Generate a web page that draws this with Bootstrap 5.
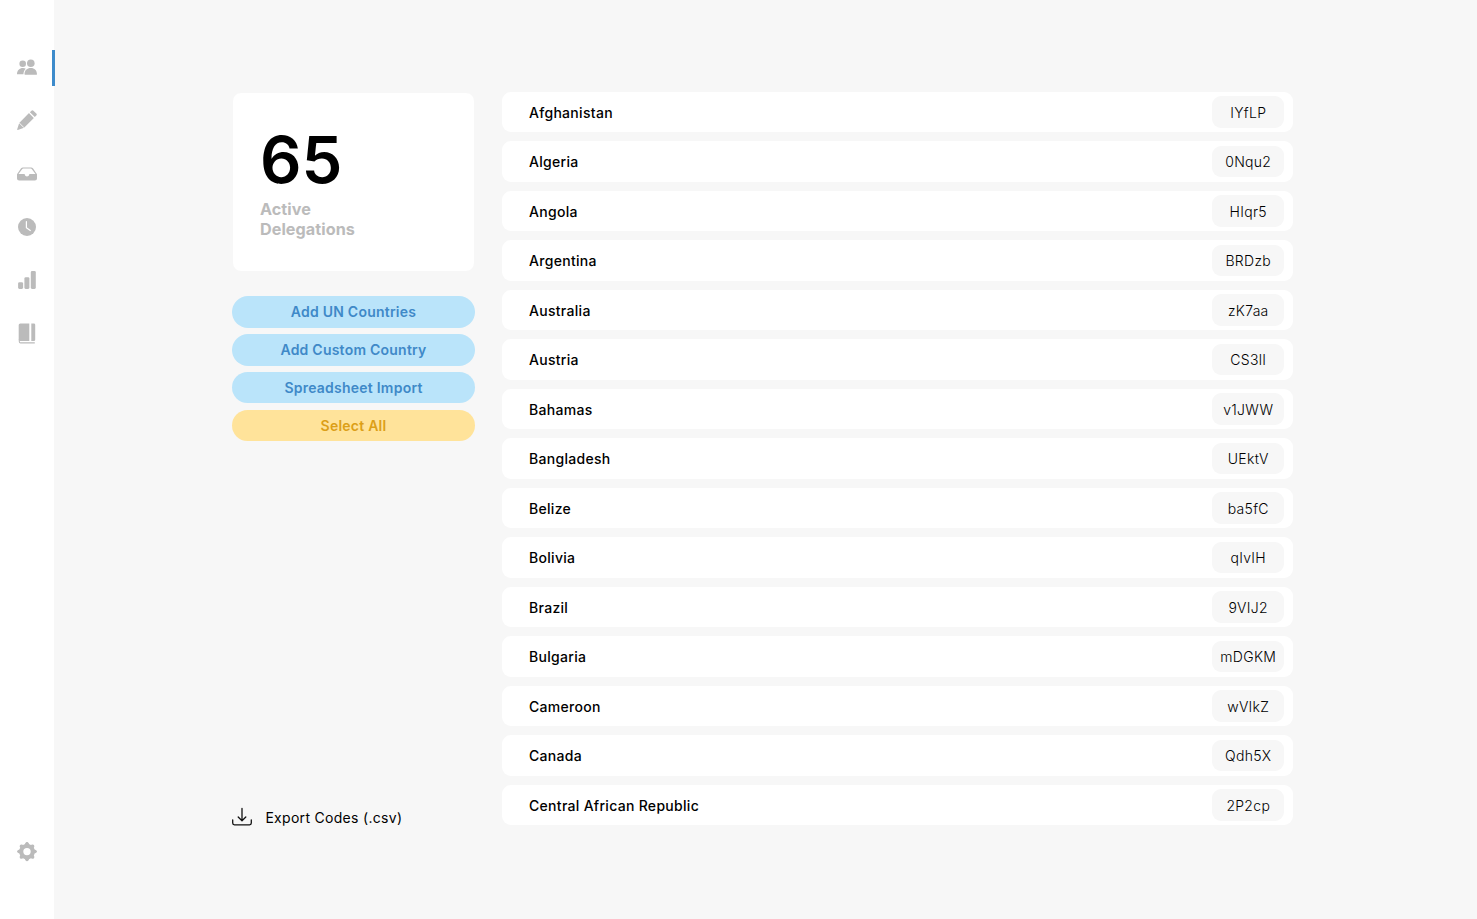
<!DOCTYPE html>
<html lang="en">
<head>
<meta charset="utf-8">
<meta name="viewport" content="width=device-width, initial-scale=1">
<title>Delegations</title>
<link href="https://cdn.jsdelivr.net/npm/bootstrap@5.3.0/dist/css/bootstrap.min.css" rel="stylesheet">
<style>
body{font-family:Inter,sans-serif;font-size:14px;letter-spacing:.3px;line-height:18px;color:#000;background:#f7f7f7}
.side{width:54px;padding:40.4px 0;color:#bbb}
.side a{height:53.3px;color:inherit}
.side svg{display:block;width:20px;height:20px}
.side a.active::after{content:"";position:absolute;right:-1px;top:9.6px;width:3px;height:36px;background:#3d8bcb}
.page{padding:91.9px 0 0 178px}
.left-col{width:243px;height:735px}
.stat{height:180px;margin-bottom:24.4px;padding:0 27px;border:1px solid #f7f7f7;border-radius:9px}
.count{font-size:65px;line-height:68px;font-weight:600;letter-spacing:0;margin-top:33px}
.label{font-size:16.2px;line-height:20px;font-weight:700;letter-spacing:.05px;color:#bbb;margin-top:5.6px}
.act{height:31.5px;margin-bottom:6.3px;padding:0;font-size:14px;line-height:32px;font-weight:600;letter-spacing:.23px;border:0;border-radius:16px;background:#bae4fa;color:#3f89c8}
.act.pick{background:#ffe39a;color:#dc9f18}
.codes{width:791px;margin-left:27px;gap:9px}
.entry{height:40.5px;padding:0 9px 0 27px;border-radius:9px;font-weight:500}
.country{padding-top:1px}
.code{width:72px;height:31.5px;border-radius:9px;background:#f7f7f7;font-weight:300;padding:7.25px 0 0 .5px}
.export{gap:13.4px;color:#000;margin-bottom:0}
.export span{padding-top:1.5px}
</style>
</head>
<body class="vh-100 overflow-hidden d-flex">
<nav class="side bg-white vh-100 d-flex flex-column flex-shrink-0">
<a class="active position-relative d-flex align-items-center justify-content-center" href="#" aria-label="Delegations"><svg viewBox="0 0 20 20" fill="currentColor"><circle cx="5.7" cy="6.8" r="3.3"/><circle cx="13.8" cy="6.2" r="3.8"/><path d="M0 17.3c0-3.7 2.5-6.2 6-6.2 1.1 0 2 .2 2.8.7-1.5 1.2-2.2 2.8-2.4 5.5zM7.5 17.3c0-4 2.5-6.3 6.3-6.3s6.2 2.3 6.2 6.3q0 .4-.5.4H8q-.5 0-.5-.4z"/></svg></a>
<a class="d-flex align-items-center justify-content-center" href="#" aria-label="Edit"><svg viewBox="0 0 20 20" fill="currentColor"><path d="M2.2 12.9 12 3.1l4.9 4.9-9.8 9.8-6.3 2.1q-.8.1-.6-.7zM12.9 2.2 14.4.7q1-1 2 0l2.9 2.9q1 1 0 2l-1.5 1.5z"/><path d="m2.2 12.9 4.9 4.9M11.9 2.1l6 6" stroke="#fff" stroke-width=".9"/></svg></a>
<a class="d-flex align-items-center justify-content-center" href="#" aria-label="Inbox"><svg viewBox="0 0 20 20" fill="currentColor"><path fill-rule="evenodd" d="M0 10.2 3.9 4.6Q4.7 3.4 6 3.4h8q1.3 0 2.1 1.2l3.9 5.6v4.3q0 2.1-2.1 2.1H2.1Q0 16.6 0 14.5zM1.5 10h5.8q.5 0 .5.6c.3 2.5 4.1 2.5 4.4 0q0-.6.5-.6h5.8L14.9 5.2Q14.5 4.6 13.7 4.6H6.3q-.8 0-1.2.6z"/></svg></a>
<a class="d-flex align-items-center justify-content-center" href="#" aria-label="Schedule"><svg viewBox="0 0 20 20"><circle cx="10" cy="10" r="9" fill="currentColor"/><path d="M9.4 4.5v6.2l3.9 2.8" fill="none" stroke="#fff" stroke-width="1.2" stroke-linecap="round" stroke-linejoin="round"/></svg></a>
<a class="d-flex align-items-center justify-content-center" href="#" aria-label="Statistics"><svg viewBox="0 0 20 20" fill="currentColor"><rect x="1.1" y="12.3" width="5" height="6.6" rx="1.3"/><rect x="7.4" y="7.3" width="5" height="11.6" rx="1.3"/><rect x="13.8" y="1.1" width="5" height="17.8" rx="1.3"/></svg></a>
<a class="d-flex align-items-center justify-content-center" href="#" aria-label="Guide"><svg viewBox="0 0 20 20" overflow="visible" fill="currentColor"><g transform="translate(0 -.5)"><path d="M3.3 0h9v17.5H3.300q-1.600 0-1.600-1.600V1.600Q1.700 0 3.300 0zM14.300 0h2.600q1.300 0 1.300 1.300v14.900q0 1.300-1.300 1.300h-2.600z"/><path d="M2.300 15.800v2.200q0 1.400 1.300 1.400h14.200" fill="none" stroke="currentColor" stroke-width="1.100"/></g></svg></a>
<a class="mt-auto d-flex align-items-center justify-content-center" href="#" aria-label="Settings"><svg viewBox="0 0 20 20"><path transform="translate(0 -.4)" fill="currentColor" fill-rule="evenodd" d="M8.400 1.400Q10-.9 11.600 1.400l.6 1.300q1.100 0 1.500.7l1.700-.5q2.100-.2 1.900 1.900l-.5 1.700q.7.500.8 1.500l1.100.5q2.600 1.500 0 3l-1.100.5q-.1 1-.8 1.500l.5 1.700q.2 2.100-1.900 1.900l-1.700-.5q-.4.700-1.500.8l-.6 1.200Q10 20.900 8.400 18.600l-.6-1.200q-1.100-.1-1.500-.8l-1.700.5q-2.100.2-1.900-1.900l.5-1.700q-.7-.5-.8-1.500l-1.100-.5q-2.600-1.500 0-3L2.400 8q.1-1 .8-1.500l-.5-1.700Q2.500 2.700 4.600 2.900l1.700.5q.4-.7 1.500-.7zM10 6.300a3.700 3.700 0 1 0 0 7.400 3.700 3.700 0 1 0 0-7.400z"/></svg></a>
</nav>
<main class="page d-flex">
<section class="left-col d-flex flex-column">
<div class="stat bg-white d-flex flex-column"><div class="count">65</div><div class="label">Active<br>Delegations</div></div>
<button class="btn act">Add UN Countries</button>
<button class="btn act">Add Custom Country</button>
<button class="btn act">Spreadsheet Import</button>
<button class="btn act pick">Select All</button>
<a class="export mt-auto d-flex align-items-center text-decoration-none" href="#"><svg width="20" height="20" viewBox="0 0 20 20" fill="none" stroke="#111" stroke-width="1.3" stroke-linecap="round" stroke-linejoin="round"><path d="M10 1.5v12M6.2 10l3.8 3.8L13.8 10M.7 12.8v3.3q0 1.7 1.7 1.7h15.2q1.7 0 1.7-1.7v-3.3"/></svg><span>Export Codes (.csv)</span></a>
</section>
<section class="codes d-flex flex-column">
<div class="entry bg-white d-flex align-items-center justify-content-between"><span class="country">Afghanistan</span><span class="code text-center">IYfLP</span></div>
<div class="entry bg-white d-flex align-items-center justify-content-between"><span class="country">Algeria</span><span class="code text-center">0Nqu2</span></div>
<div class="entry bg-white d-flex align-items-center justify-content-between"><span class="country">Angola</span><span class="code text-center">HIqr5</span></div>
<div class="entry bg-white d-flex align-items-center justify-content-between"><span class="country">Argentina</span><span class="code text-center">BRDzb</span></div>
<div class="entry bg-white d-flex align-items-center justify-content-between"><span class="country">Australia</span><span class="code text-center">zK7aa</span></div>
<div class="entry bg-white d-flex align-items-center justify-content-between"><span class="country">Austria</span><span class="code text-center">CS3lI</span></div>
<div class="entry bg-white d-flex align-items-center justify-content-between"><span class="country">Bahamas</span><span class="code text-center">v1JWW</span></div>
<div class="entry bg-white d-flex align-items-center justify-content-between"><span class="country">Bangladesh</span><span class="code text-center">UEktV</span></div>
<div class="entry bg-white d-flex align-items-center justify-content-between"><span class="country">Belize</span><span class="code text-center">ba5fC</span></div>
<div class="entry bg-white d-flex align-items-center justify-content-between"><span class="country">Bolivia</span><span class="code text-center">qIvIH</span></div>
<div class="entry bg-white d-flex align-items-center justify-content-between"><span class="country">Brazil</span><span class="code text-center">9VIJ2</span></div>
<div class="entry bg-white d-flex align-items-center justify-content-between"><span class="country">Bulgaria</span><span class="code text-center">mDGKM</span></div>
<div class="entry bg-white d-flex align-items-center justify-content-between"><span class="country">Cameroon</span><span class="code text-center">wVIkZ</span></div>
<div class="entry bg-white d-flex align-items-center justify-content-between"><span class="country">Canada</span><span class="code text-center">Qdh5X</span></div>
<div class="entry bg-white d-flex align-items-center justify-content-between"><span class="country">Central African Republic</span><span class="code text-center">2P2cp</span></div>
</section>
</main>
<script src="https://cdn.jsdelivr.net/npm/bootstrap@5.3.0/dist/js/bootstrap.bundle.min.js"></script>
</body>
</html>
